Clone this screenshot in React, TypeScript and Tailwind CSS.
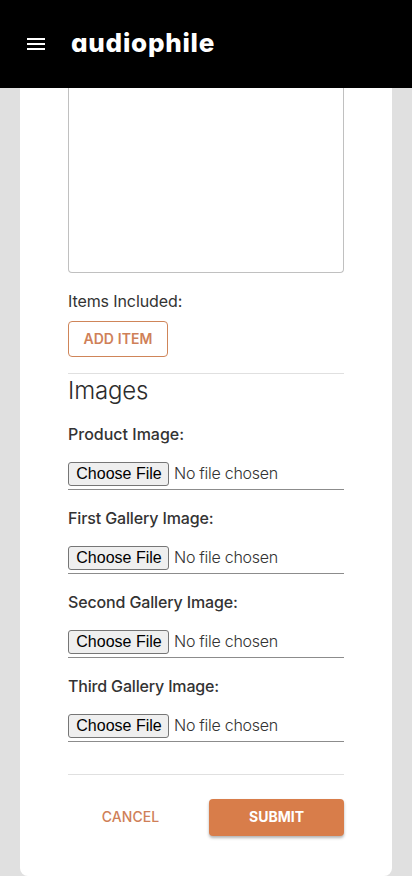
const fields = [
  { label: "Product Image:", spacing: "tracking-[0px]" },
  { label: "First Gallery Image:", spacing: "tracking-[-0.14px]" },
  { label: "Second Gallery Image:", spacing: "tracking-[-0.14px]" },
  { label: "Third Gallery Image:", spacing: "tracking-[-0.17px]" },
];

function Header() {
  return (
    <header className="flex h-[88px] items-center bg-black pl-6 text-white">
      <svg width="24" height="24" viewBox="0 0 24 24" fill="currentColor" aria-label="Menu">
        <path d="M3 18h18v-2H3v2zm0-5h18v-2H3v2zm0-7v2h18V6H3z" />
      </svg>
      <span className="-mt-0.5 ml-[23px] text-[26px] leading-8 font-extrabold tracking-[0.75px] whitespace-nowrap [font-feature-settings:'cv11','ss03']">
        audiophile
      </span>
    </header>
  );
}

function FileField({ label, spacing }: { label: string; spacing: string }) {
  return (
    <div className="mb-4 flex h-[68px] flex-col border-b border-[#8c8c8c]">
      <label className={`h-6 text-base font-medium whitespace-nowrap text-[#333] ${spacing}`}>{label}</label>
      <div className="mt-4 flex h-6 items-center">
        <button
          type="button"
          className="h-6 w-[101px] rounded-[3px] border border-[#767676] bg-[#efefef] pl-px font-['Liberation_Sans',Arial,sans-serif] text-base leading-[22px] whitespace-nowrap text-black"
        >
          Choose File
        </button>
        <span className="-mt-0.5 ml-[5px] text-base font-light tracking-[-0.27px] whitespace-nowrap text-[#333]">No file chosen</span>
      </div>
    </div>
  );
}

export default function App() {
  return (
    <div className="h-[876px] overflow-hidden bg-[#e0e0e0] font-['Inter',sans-serif]">
      <Header />
      <main className="mx-5 h-[788px] rounded-b-lg bg-white px-12">
        <div className="h-[185px] rounded-b border border-t-0 border-[#c0c0c0]" />
        <p className="mt-4 h-6 text-base font-normal tracking-[-0.1px] text-[#333]">Items Included:</p>
        <button
          type="button"
          className="mt-2 flex h-9 w-[100px] items-center justify-center rounded border border-[#cf8559] text-sm font-semibold tracking-[0.1px] whitespace-nowrap text-[#cf8058]"
        >
          ADD ITEM
        </button>
        <h2 className="mt-4 mb-[15px] h-[34px] border-t border-[#e0e0e0] text-2xl leading-[33px] font-light tracking-[-0.15px] text-[#2c2c2c]">
          Images
        </h2>
        {fields.map((f) => (
          <FileField key={f.label} {...f} />
        ))}
        <div className="mt-8 flex justify-between border-t border-[#e0e0e0] pt-6">
          <button type="button" className="h-[37px] w-[125px] pb-px text-sm font-medium tracking-[0.1px] whitespace-nowrap text-[#cf8058]">
            CANCEL
          </button>
          <button
            type="button"
            className="h-[37px] w-[135px] rounded bg-[#d87d4a] pb-px text-sm font-bold whitespace-nowrap text-white shadow-[0_2px_3px_rgba(0,0,0,0.3)]"
          >
            SUBMIT
          </button>
        </div>
      </main>
    </div>
  );
}
